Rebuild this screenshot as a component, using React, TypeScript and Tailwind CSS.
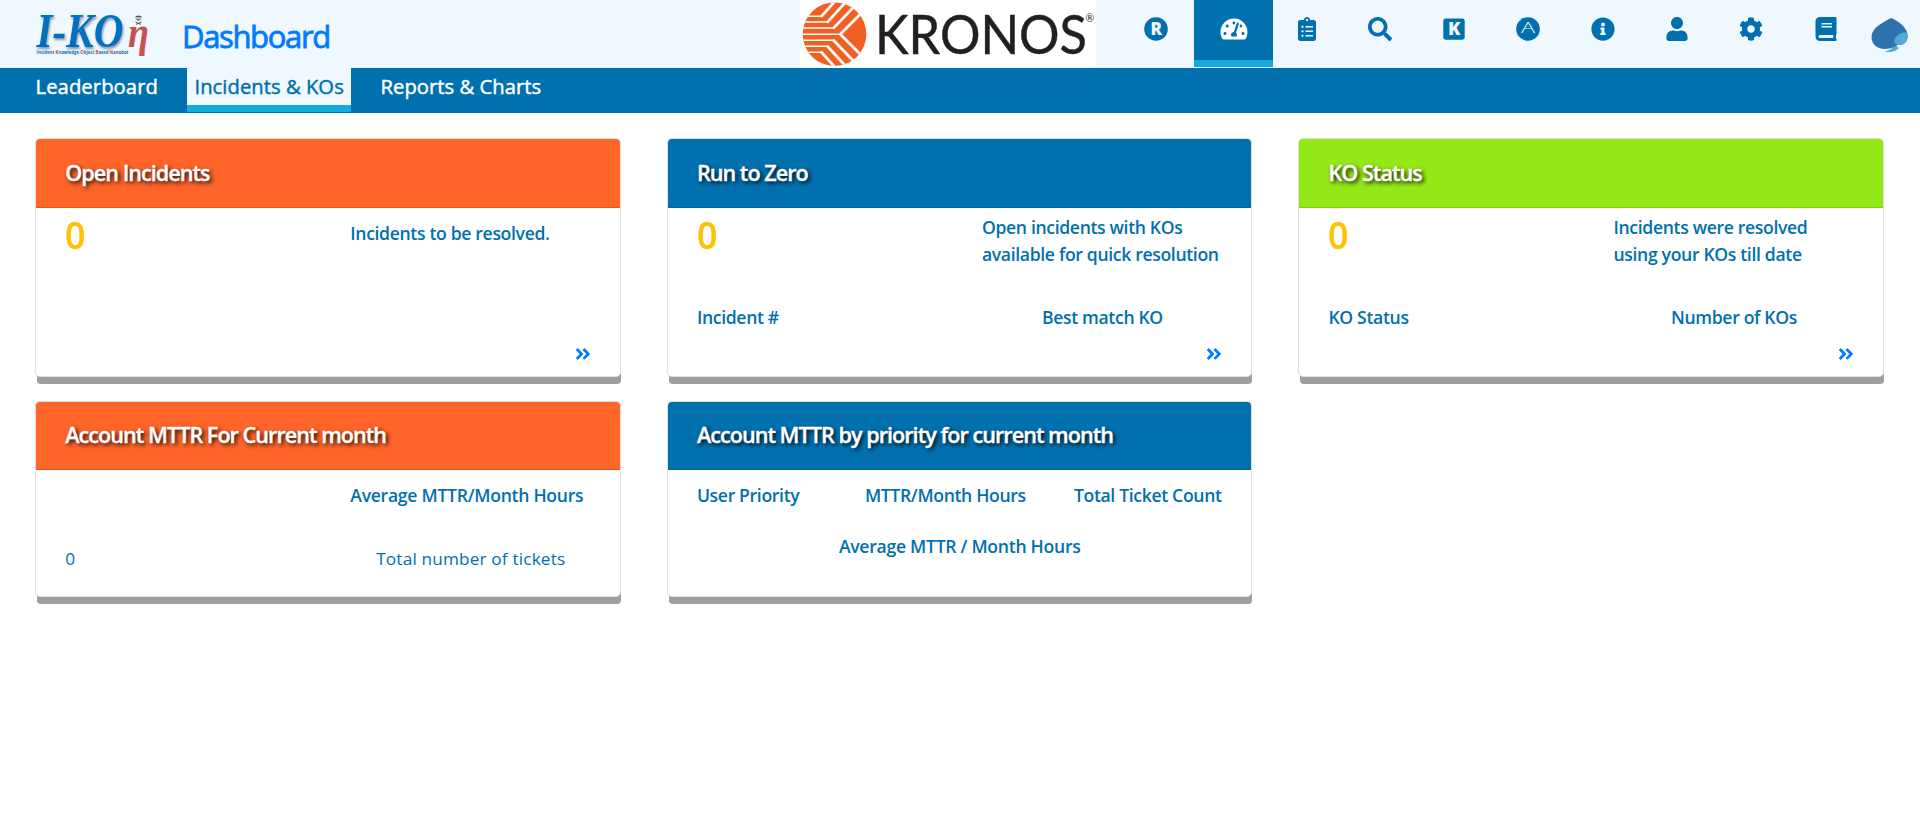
import React from 'react';
import {
  FaAngleDoubleRight,
  FaBook,
  FaClipboardList,
  FaCog,
  FaInfoCircle,
  FaSearch,
  FaTachometerAlt,
  FaUser,
} from 'react-icons/fa';

function IkonLogo() {
  return (
    <svg width="116" height="48" viewBox="0 0 116 48" className="mt-[10px] shrink-0 overflow-visible">
      <text x="0.5" y="36.5" textLength="87" lengthAdjust="spacingAndGlyphs" fontFamily="Liberation Serif, serif" fontWeight="700" fontStyle="italic" fontSize="49" fill="#0070c0" className="drop-shadow-[1px_2px_1px_rgba(60,80,100,0.6)]">
        I-KO
      </text>
      <text x="92" y="36.5" textLength="21" lengthAdjust="spacingAndGlyphs" fontFamily="Liberation Serif, serif" fontWeight="700" fontStyle="italic" fontSize="45" fill="#c9504d">
        η
      </text>
      <ellipse cx="102.5" cy="7.8" rx="3.2" ry="2.8" fill="#b9bcc0" />
      <path d="M99.8 6.5h5.6M101 9.8h3M99.5 12l5.5 2.4M105.5 12l-5.5 2.4" stroke="#444" strokeWidth="0.9" />
      <text x="0.5" y="44.2" textLength="92" lengthAdjust="spacingAndGlyphs" fontFamily="Open Sans, sans-serif" fontWeight="700" fontSize="5.2" fill="#1f6f9f">
        <tspan fill="#d0403c">I</tspan>ncident <tspan fill="#d0403c">K</tspan>nowledge <tspan fill="#d0403c">O</tspan>bject <tspan fill="#d0403c">B</tspan>ased <tspan fill="#d0403c">N</tspan>anobot
      </text>
    </svg>
  );
}

function KronosLogo() {
  return (
    <svg width="296" height="68" viewBox="0 0 296 68" className="shrink-0 overflow-visible bg-white">
      <defs>
        <clipPath id="disc">
          <circle cx="34.5" cy="34.2" r="31.8" />
        </clipPath>
      </defs>
      <g clipPath="url(#disc)">
        <rect width="68" height="68" fill="#f15f22" />
        <g fill="none" stroke="#fff">
          <path strokeWidth="1.4" d="M0 16.3H22M0 22H28M0 28H34M0 34.2H41M0 40.2H34M0 46.2H28M0 52.2H22" />
          <g strokeWidth="2.8">
            <path d="M21 16.9L37 -1M27 22.6L48 -0.4M33 28.6L59 1.6M40 34.4L66 8.4" />
            <path d="M21 51.6L37 69.5M27 45.8L48 68.8M33 39.8L59 66.8M40 34L66 60" />
          </g>
        </g>
      </g>
      <text x="75" y="54" textLength="212" lengthAdjust="spacingAndGlyphs" fontFamily="Lato, sans-serif" fontSize="54.5" fill="#231f20" stroke="#231f20" strokeWidth="0.5">
        KRONOS
      </text>
      <text x="285.5" y="21.5" fontFamily="Lato, sans-serif" fontSize="10.5" fill="#231f20">
        ®
      </text>
    </svg>
  );
}

function SpadeLogo() {
  return (
    <svg width="38" height="36" viewBox="0 0 38 36" className="mt-[17px] ml-[9px] shrink-0">
      <path d="M24 27C22.5 31 19 33.5 13.5 34.4C19 35.8 25 34.6 28 31C26.3 30.3 25.5 29 25.5 27Z" fill="#4fabd8" />
      <path d="M20.3 1C26 3.5 33 8 35.8 14.5C37.5 19 32 26.5 28 26.3C24.5 29.5 21 31.8 13.5 32C6 32 0.5 27 0.5 20C0.5 11 12 5 20.3 1Z" fill="#2d72ab" />
      <path d="M36.3 15.8C38.5 22 34.2 28.2 29 28C25 27.8 22.5 25.5 23.5 22.3C25 18.3 31.5 13.4 36.3 15.8Z" fill="#4fabd8" />
    </svg>
  );
}

function CircleR() {
  return (
    <svg width="24" height="24" viewBox="0 0 24 24">
      <circle cx="12" cy="12" r="11.8" fill="#0070af" />
      <text x="12.2" y="18" textAnchor="middle" fontFamily="Open Sans, sans-serif" fontWeight="800" fontSize="17" fill="#eff7ff">
        R
      </text>
    </svg>
  );
}

function SquareK() {
  return (
    <svg width="24" height="24" viewBox="0 0 24 24">
      <rect x="1.3" y="1.5" width="21.4" height="21.2" rx="2.4" fill="#0070af" />
      <text x="12.2" y="18.4" textAnchor="middle" fontFamily="Open Sans, sans-serif" fontWeight="800" fontSize="18" fill="#eff7ff">
        K
      </text>
    </svg>
  );
}

function CircleA() {
  return (
    <svg width="24" height="24" viewBox="0 0 24 24">
      <circle cx="12" cy="12" r="11.8" fill="#0070af" />
      <text x="5" y="16" textLength="14" lengthAdjust="spacingAndGlyphs" fontFamily="Open Sans, sans-serif" fontWeight="300" fontSize="14" fill="#eff7ff">
        A
      </text>
    </svg>
  );
}

const navIcons = [
  { width: 'w-[76px]', icon: <CircleR /> },
  { width: 'w-[79px]', icon: <FaTachometerAlt className="h-6 w-[28px]" />, active: true },
  { width: 'w-[68px]', icon: <FaClipboardList className="size-6" /> },
  { width: 'w-[77px]', icon: <FaSearch className="size-6" /> },
  { width: 'w-[72px]', icon: <SquareK /> },
  { width: 'w-[75px]', icon: <CircleA /> },
  { width: 'w-[76px]', icon: <FaInfoCircle className="size-6" /> },
  { width: 'w-[72px]', icon: <FaUser className="size-6" /> },
  { width: 'w-[76px]', icon: <FaCog className="size-6" /> },
  { width: 'w-[73px]', icon: <FaBook className="size-6" /> },
];

type CardProps = {
  title: string;
  color: string;
  height: string;
  headerHeight: string;
  more?: boolean;
  children: React.ReactNode;
};

function Card({ title, color, height, headerHeight, more, children }: CardProps) {
  return (
    <section
      className={`flex flex-col rounded-[5px] border border-[#dfdfdf] bg-white shadow-[1px_8px_0_-1px_#9e9e9e] ${height}`}
    >
      <h2
        className={`flex shrink-0 items-center rounded-t-[4px] border-b border-black/[.125] pl-[29px] text-[21.6px] font-semibold tracking-[-0.97px] text-white [-webkit-text-stroke:0.35px_white] [text-shadow:2px_2px_4px_#000] ${headerHeight} ${color}`}
      >
        {title}
      </h2>
      <div className="flex grow flex-col pl-[29px] text-[17.6px] leading-[27px] font-semibold tracking-[-0.34px] text-[#0070af]">
        {children}
        {more && (
          <FaAngleDoubleRight className="mt-auto mr-[28px] mb-[13px] size-[18px] self-end text-[#007bff]" />
        )}
      </div>
    </section>
  );
}

function Stat({ children, single }: { children: React.ReactNode; single?: boolean }) {
  return (
    <div className="grid h-[96px] grid-cols-[285px_1fr]">
      <span className="origin-left scale-x-95 pt-[6px] text-[37.5px] leading-[42px] text-[#ffc107] [-webkit-text-stroke:0.3px_#ffc107]">
        0
      </span>
      <p className={single ? 'pt-[12px]' : 'pt-[6px]'}>{children}</p>
    </div>
  );
}

function Pair({ left, right }: { left: string; right: string }) {
  return (
    <div className="grid grid-cols-[285px_241px]">
      <span>{left}</span>
      <span className="text-center">{right}</span>
    </div>
  );
}

export default function App() {
  return (
    <div className="min-h-[825px] bg-white font-['Open_Sans',sans-serif]">
      <header className="flex h-[68px] bg-[#eff7ff] pl-[35.5px]">
        <IkonLogo />
        <h1 className="ml-[30.5px] w-[618px] pt-[14px] text-[31px] leading-[44px] tracking-[-1.35px] text-[#007bff] [-webkit-text-stroke:0.8px_#007bff]">
          Dashboard
        </h1>
        <KronosLogo />
        <div className="ml-[22px] flex">
          {navIcons.map((item, i) => (
            <a
              key={i}
              className={`flex h-[67px] justify-center pt-[17px] ${item.width} ${
                item.active ? 'border-b-[7px] border-[#14aadc] bg-[#0070af] text-white' : 'text-[#0070af]'
              }`}
            >
              {item.icon}
            </a>
          ))}
        </div>
        <SpadeLogo />
      </header>
      <nav className="flex h-[45px] bg-[#0070af] pl-[28px] text-[20.2px] leading-[37px] tracking-[0.05px] text-white">
        <a className="w-[159px] pl-[7.5px] tracking-[0.1px] [-webkit-text-stroke:0.45px_white]">Leaderboard</a>
        <a className="h-[44px] w-[164px] border-b-[7px] border-[#14aadc] bg-[#eff7ff] pl-[7.5px] text-[#0070af] [-webkit-text-stroke:0.45px_#0070af]">
          Incidents &amp; KOs
        </a>
        <a className="pl-[29.5px] [-webkit-text-stroke:0.45px_white]">Reports &amp; Charts</a>
      </nav>
      <main className="grid grid-cols-[repeat(3,585.6px)] gap-x-[46px] gap-y-[24px] pt-[25px] pl-[35.3px]">
        <Card title="Open Incidents" color="bg-[#ff6429]" height="h-[239px]" headerHeight="h-[69px]" more>
          <Stat single>Incidents to be resolved.</Stat>
        </Card>
        <Card title="Run to Zero" color="bg-[#0070af]" height="h-[239px]" headerHeight="h-[69px]" more>
          <Stat>
            Open incidents with KOs
            <br />
            available for quick resolution
          </Stat>
          <Pair left="Incident #" right="Best match KO" />
        </Card>
        <Card title="KO Status" color="bg-[#94e817]" height="h-[239px]" headerHeight="h-[69px]" more>
          <Stat>
            Incidents were resolved
            <br />
            using your KOs till date
          </Stat>
          <Pair left="KO Status" right="Number of KOs" />
        </Card>
        <Card title="Account MTTR For Current month" color="bg-[#ff6429]" height="h-[196px]" headerHeight="h-[68px]">
          <p className="pt-[12px] pl-[285px] tracking-[-0.28px]">Average MTTR/Month Hours</p>
          <div className="pt-[36px] text-[17.2px] font-normal tracking-[0.17px]">
            <Pair left="0" right="Total number of tickets" />
          </div>
        </Card>
        <Card title="Account MTTR by priority for current month" color="bg-[#0070af]" height="h-[196px]" headerHeight="h-[68px]">
          <div className="grid grid-cols-[168px_209px_1fr] pt-[12px]">
            <span>User Priority</span>
            <span>MTTR/Month Hours</span>
            <span>Total Ticket Count</span>
          </div>
          <p className="pt-[24px] pr-[29px] text-center tracking-[-0.28px]">Average MTTR / Month Hours</p>
        </Card>
      </main>
    </div>
  );
}
